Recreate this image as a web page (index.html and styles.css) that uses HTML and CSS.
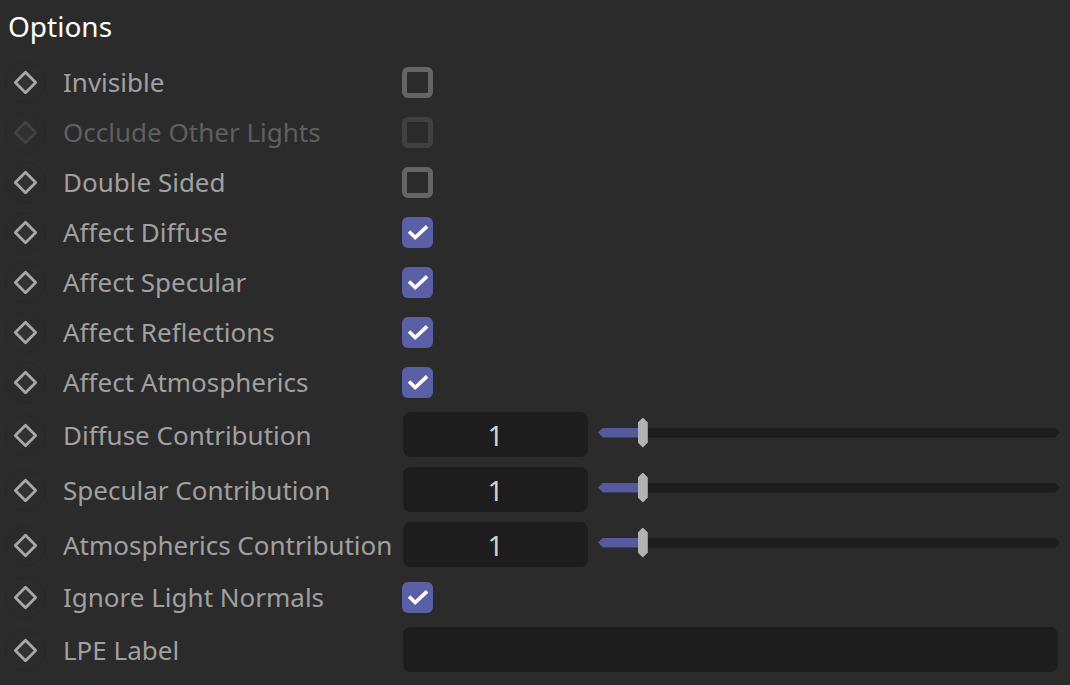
FILE: index.html
```html
<!DOCTYPE html>
<html lang="en">
<head>
<meta charset="utf-8">
<title>Options</title>
<link rel="stylesheet" href="styles.css">
</head>
<body>
<svg class="defs" width="0" height="0" aria-hidden="true">
  <symbol id="key" viewBox="0 0 42 42">
    <circle cx="21.5" cy="21.5" r="20" fill="none" stroke="#282828"/>
    <path d="M21.5 11.3 31.7 21.5 21.5 31.7 11.3 21.5Z" fill="#ffffff" fill-opacity=".03" stroke="currentColor" stroke-width="2.8" stroke-linejoin="round"/>
  </symbol>
</svg>
<form class="panel">
  <h1 class="title">Options</h1>
  <div class="row">
    <button class="key" type="button" aria-label="Key Invisible"><svg class="key-icon"><use href="#key"/></svg></button>
    <label class="label" for="invisible">Invisible</label>
    <input class="check" type="checkbox" id="invisible">
  </div>
  <div class="row row-disabled">
    <button class="key" type="button" aria-label="Key Occlude Other Lights" disabled><svg class="key-icon"><use href="#key"/></svg></button>
    <label class="label" for="occlude">Occlude Other Lights</label>
    <input class="check" type="checkbox" id="occlude" disabled>
  </div>
  <div class="row">
    <button class="key" type="button" aria-label="Key Double Sided"><svg class="key-icon"><use href="#key"/></svg></button>
    <label class="label" for="double">Double Sided</label>
    <input class="check" type="checkbox" id="double">
  </div>
  <div class="row">
    <button class="key" type="button" aria-label="Key Affect Diffuse"><svg class="key-icon"><use href="#key"/></svg></button>
    <label class="label" for="a-diffuse">Affect Diffuse</label>
    <input class="check" type="checkbox" id="a-diffuse" checked>
  </div>
  <div class="row">
    <button class="key" type="button" aria-label="Key Affect Specular"><svg class="key-icon"><use href="#key"/></svg></button>
    <label class="label" for="a-specular">Affect Specular</label>
    <input class="check" type="checkbox" id="a-specular" checked>
  </div>
  <div class="row">
    <button class="key" type="button" aria-label="Key Affect Reflections"><svg class="key-icon"><use href="#key"/></svg></button>
    <label class="label" for="a-reflections">Affect Reflections</label>
    <input class="check" type="checkbox" id="a-reflections" checked>
  </div>
  <div class="row">
    <button class="key" type="button" aria-label="Key Affect Atmospherics"><svg class="key-icon"><use href="#key"/></svg></button>
    <label class="label" for="a-atmospherics">Affect Atmospherics</label>
    <input class="check" type="checkbox" id="a-atmospherics" checked>
  </div>
  <div class="row row-field">
    <button class="key" type="button" aria-label="Key Diffuse Contribution"><svg class="key-icon"><use href="#key"/></svg></button>
    <label class="label" for="c-diffuse">Diffuse Contribution</label>
    <div class="control">
      <input class="field number" type="text" inputmode="decimal" id="c-diffuse" value="1">
      <div class="slider"><span class="fill" style="width:10%"></span><input class="range" type="range" min="0" max="10" value="1" aria-label="Diffuse Contribution"></div>
    </div>
  </div>
  <div class="row row-field">
    <button class="key" type="button" aria-label="Key Specular Contribution"><svg class="key-icon"><use href="#key"/></svg></button>
    <label class="label" for="c-specular">Specular Contribution</label>
    <div class="control">
      <input class="field number" type="text" inputmode="decimal" id="c-specular" value="1">
      <div class="slider"><span class="fill" style="width:10%"></span><input class="range" type="range" min="0" max="10" value="1" aria-label="Specular Contribution"></div>
    </div>
  </div>
  <div class="row row-field">
    <button class="key" type="button" aria-label="Key Atmospherics Contribution"><svg class="key-icon"><use href="#key"/></svg></button>
    <label class="label" for="c-atmospherics">Atmospherics Contribution</label>
    <div class="control">
      <input class="field number" type="text" inputmode="decimal" id="c-atmospherics" value="1">
      <div class="slider"><span class="fill" style="width:10%"></span><input class="range" type="range" min="0" max="10" value="1" aria-label="Atmospherics Contribution"></div>
    </div>
  </div>
  <div class="row">
    <button class="key" type="button" aria-label="Key Ignore Light Normals"><svg class="key-icon"><use href="#key"/></svg></button>
    <label class="label" for="normals">Ignore Light Normals</label>
    <input class="check" type="checkbox" id="normals" checked>
  </div>
  <div class="row row-field">
    <button class="key" type="button" aria-label="Key LPE Label"><svg class="key-icon"><use href="#key"/></svg></button>
    <label class="label" for="lpe">LPE Label</label>
    <div class="control control-text"><input class="field" type="text" id="lpe"></div>
  </div>
</form>
</body>
</html>
```
FILE: styles.css
```css
* { box-sizing: border-box; }
body {
  margin: 0;
  background: #2b2b2b;
  color: #a0a0a0;
  font: 26px/36px "Noto Sans", "Open Sans", sans-serif;
}
.defs { display: block; }
.panel { padding: 0 10px 0 4px; }
.title {
  margin: 0;
  padding: 8px 4px 13px;
  font-size: 28px;
  font-weight: 400;
  line-height: 36px;
  color: #ffffff;
}
.row {
  display: grid;
  grid-template-columns: 59px 339px 1fr;
  align-items: center;
  height: 50px;
}
.row-field { height: 55px; }
.row-disabled { color: #5f5f5f; }
.key {
  width: 42px;
  height: 42px;
  padding: 0;
  border: 0;
  background: none;
  color: #a8a8a8;
}
.key:disabled { color: #424242; }
.key-icon { display: block; width: 42px; height: 42px; }
.label { white-space: nowrap; }
.check {
  appearance: none;
  width: 31px;
  height: 31px;
  margin: 0;
  border: 5px solid #656565;
  border-radius: 6px;
  background: #2b2b2b;
}
.check:disabled { border-color: #404040; }
.check:checked {
  border: 0;
  background: #5b5fa5 url("data:image/svg+xml,%3Csvg xmlns='http://www.w3.org/2000/svg' viewBox='0 0 31 31'%3E%3Cpath d='M8.3 15.7 13.2 20.6 23.8 10.6' fill='none' stroke='white' stroke-width='3.6' stroke-linecap='square'/%3E%3C/svg%3E") center / 31px 31px no-repeat;
}
.control { display: flex; align-items: center; gap: 10px; padding-left: 1px; }
.control-text { padding-right: 2px; }
.field {
  width: 100%;
  height: 45px;
  padding: 0 12px;
  border: 0;
  border-radius: 8px;
  background: #1d1d1d;
  color: #dccfcb;
  font: inherit;
}
.number { flex: none; width: 185px; font-size: 28px; text-align: center; }
.slider {
  display: grid;
  flex: 1;
  align-items: center;
  height: 30px;
  margin-bottom: 4px;
}
.slider::before, .fill, .range { grid-area: 1 / 1; }
.slider::before {
  content: "";
  height: 10px;
  background: #1d1d1d;
  clip-path: polygon(0 50%, 5px 0, calc(100% - 5px) 0, 100% 50%, calc(100% - 5px) 100%, 5px 100%);
}
.fill {
  height: 10px;
  background: #555a9c;
  clip-path: polygon(0 50%, 5px 0, 100% 0, 100% 100%, 5px 100%);
}
.range {
  appearance: none;
  height: 30px;
  margin: 0 0 0 -6px;
  background: none;
}
.range::-webkit-slider-thumb {
  appearance: none;
  width: 10px;
  height: 30px;
  background: #b3b3b3;
  clip-path: polygon(50% 0, 100% 5px, 100% 25px, 50% 100%, 0 25px, 0 5px);
}
```
